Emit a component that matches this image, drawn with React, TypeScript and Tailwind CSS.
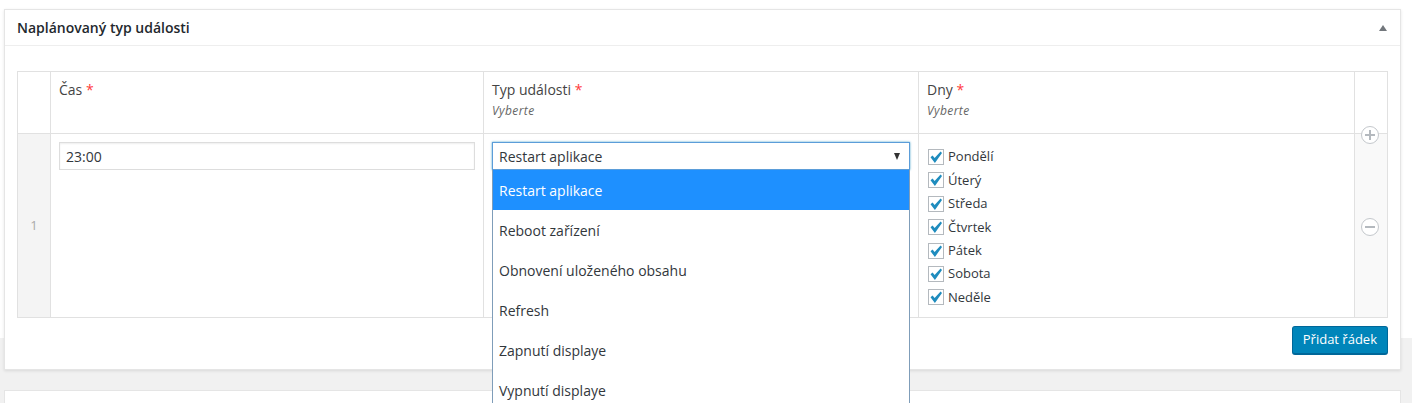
const DAYS = ['Pondělí', 'Úterý', 'Středa', 'Čtvrtek', 'Pátek', 'Sobota', 'Neděle']

const OPTIONS = [
  'Restart aplikace',
  'Reboot zařízení',
  'Obnovení uloženého obsahu',
  'Refresh',
  'Zapnutí displaye',
  'Vypnutí displaye',
]

function Required() {
  return <span className="text-[#ff3b3b]"> *</span>
}

function RoundButton({ minus, className }: { minus?: boolean; className: string }) {
  return (
    <span
      className={`absolute left-[6px] flex h-[18px] w-[18px] items-center justify-center rounded-full border border-[#c4c8cc] bg-white ${className}`}
    >
      <span className="relative block h-[10px] w-[10px]">
        <span className="absolute left-0 top-[4px] h-[2px] w-[10px] bg-[#b4b9be]" />
        {!minus && <span className="absolute left-[4px] top-0 h-[10px] w-[2px] bg-[#b4b9be]" />}
      </span>
    </span>
  )
}

function Tick() {
  return (
    <svg viewBox="0 0 14 14" className="h-[14px] w-[14px]">
      <polygon points="1.5,7.2 3.6,5.6 5.6,8 11.6,1.6 13,3 5.9,13 " fill="#1e8cbe" />
    </svg>
  )
}

export default function App() {
  return (
    <div className="h-[403px] w-[1412px] overflow-hidden bg-[linear-gradient(#fff_338px,#f1f1f1_338px)] pl-1 pr-[11px] pt-[9px] font-['Open_Sans',sans-serif] text-[14px] text-[#444]">
      <section className="h-[361px] border border-[#e5e5e5] bg-white shadow-[0_1px_3px_rgba(0,0,0,0.1)]">
        <header className="flex h-[36px] items-center justify-between border-b border-[#eee] pl-3 pr-[13px]">
          <h2 className="text-[14px] font-semibold text-[#23282d]">Naplánovaný typ události</h2>
          <span className="mt-px h-0 w-0 border-x-[4px] border-b-[6px] border-x-transparent border-b-[#72777c]" />
        </header>

        <div className="px-3 pt-[25px]">
          <div className="grid h-[247px] grid-cols-[33px_433px_435px_436px_32px] grid-rows-[62px_1fr] border border-[#e1e1e1]">
            <div className="border-b border-r border-[#e1e1e1]" />
            <div className="border-b border-r border-[#e1e1e1] px-2 pt-2 leading-5">
              Čas<Required />
            </div>
            <div className="border-b border-r border-[#e1e1e1] px-2 pt-2 leading-5">
              Typ události<Required />
              <p className="mt-[2px] text-[12px] italic leading-[18px] tracking-[0.4px] text-[#666]">Vyberte</p>
            </div>
            <div className="border-b border-r border-[#e1e1e1] px-2 pt-2 leading-5">
              Dny<Required />
              <p className="mt-[2px] text-[12px] italic leading-[18px] tracking-[0.4px] text-[#666]">Vyberte</p>
            </div>
            <div className="border-b border-[#e1e1e1]" />

            <div className="flex items-center justify-center border-r border-[#e1e1e1] bg-[#f4f4f4] text-[13px] text-[#aaa]">1</div>
            <div className="border-r border-[#e1e1e1] px-2 pt-2">
              <div className="flex h-[28px] items-center border border-[#ddd] px-[6px] pt-px text-[#32373c] shadow-[inset_0_1px_2px_rgba(0,0,0,0.07)]">
                23:00
              </div>
            </div>
            <div className="relative border-r border-[#e1e1e1] px-2 pt-2">
              <div className="flex h-[28px] items-center justify-between border border-[#5b9dd9] px-[6px] pr-[9px] pt-px text-[#32373c] shadow-[0_0_2px_rgba(30,140,190,0.8)]">
                <span>Restart aplikace</span>
                <span className="h-0 w-0 border-x-[3.5px] border-t-[7px] border-x-transparent border-t-[#333]" />
              </div>
              <ul className="absolute left-2 top-[36px] z-10 h-[240px] w-[418px] border-x border-[#7f9db9] bg-white">
                {OPTIONS.map((option, index) => (
                  <li
                    key={option}
                    className={`flex h-10 items-center px-[6px] ${index === 0 ? 'bg-[#1e90ff] text-white' : 'text-[#32373c]'}`}
                  >
                    {option}
                  </li>
                ))}
              </ul>
            </div>
            <div className="border-r border-[#e1e1e1] pl-[9px] pt-[11.4px] text-[13px]">
              {DAYS.map((day) => (
                <label key={day} className="flex h-[23.4px] items-center gap-1 text-[#32373c]">
                  <span className="flex h-4 w-4 items-center justify-center border border-[#b4b9be] bg-white">
                    <Tick />
                  </span>
                  {day}
                </label>
              ))}
            </div>
            <div className="relative bg-[#f9f9f9]">
              <RoundButton className="top-[-8px]" />
              <RoundButton minus className="top-[84px]" />
            </div>
          </div>

          <div className="mt-2 flex justify-end">
            <button className="h-[29px] rounded-[3px] border border-[#006799] border-b-2 bg-[#0085ba] px-[10px] text-[13px] text-white">
              Přidat řádek
            </button>
          </div>
        </div>
      </section>

      <section className="mt-[20px] h-[40px] border border-[#e5e5e5] bg-white" />
    </div>
  )
}
